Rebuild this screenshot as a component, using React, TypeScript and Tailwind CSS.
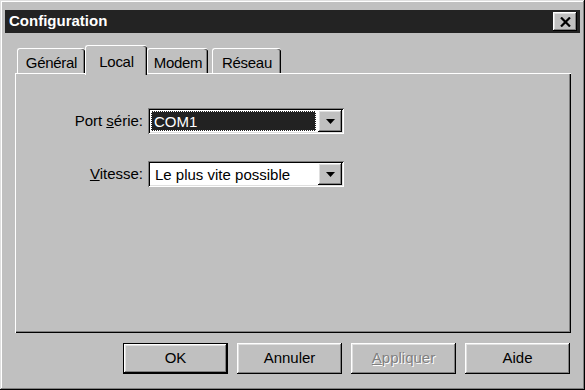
import React from 'react';

const raised =
  'shadow-[inset_-1px_-1px_0_#000,inset_1px_1px_0_#fff,inset_-2px_-2px_0_#808080,inset_2px_2px_0_#dfdfdf]';
const sunken =
  'shadow-[inset_1px_1px_0_#808080,inset_-1px_-1px_0_#fff,inset_2px_2px_0_#000,inset_-2px_-2px_0_#dfdfdf]';

const Arrow = () => (
  <svg width="9" height="5" viewBox="0 0 9 5">
    <path d="M0 0h9L4.5 5z" fill="#000" />
  </svg>
);

interface ComboProps {
  value: string;
  focused?: boolean;
}

const Combo: React.FC<ComboProps> = ({ value, focused }) => (
  <div className={`w-[196px] h-[26px] bg-white flex items-center p-[2px] ${sunken}`}>
    <div className="flex-1 h-full flex items-center pl-[1px] pr-[2px] py-[1px]">
      {focused ? (
        <div className="w-full h-full bg-[#222] border border-dotted border-white text-white flex items-center pl-[2px] leading-none">
          {value}
        </div>
      ) : (
        <div className="pl-[4px] leading-none">{value}</div>
      )}
    </div>
    <div className={`w-[24px] h-full bg-[#c0c0c0] flex items-center justify-center ${raised}`}>
      <Arrow />
    </div>
  </div>
);

const Tab: React.FC<{ label: string; w: string; active?: boolean }> = ({ label, w, active }) => (
  <div
    className={`${w} text-center text-[15px] tracking-[-0.3px] bg-[#c0c0c0] rounded-t-[3px] border-t border-l border-white shadow-[inset_-1px_0_0_#000,inset_-2px_0_0_#808080] ${
      active ? 'relative z-10 h-[30px] -mb-[2px] pt-[5px]' : 'h-[25px] pt-[3px]'
    }`}
  >
    {label}
  </div>
);

const Button: React.FC<{ children: React.ReactNode; def?: boolean }> = ({ children, def }) => (
  <div className={`w-[105px] h-[31px] ${def ? 'border border-black' : ''}`}>
    <div className={`w-full h-full flex items-center justify-center text-[15px] ${raised}`}>{children}</div>
  </div>
);

export default function App() {
  return (
    <div
      className={`w-[585px] h-[390px] bg-[#c0c0c0] text-black font-['Liberation_Sans',Arial,sans-serif] pt-[10px] px-[5px] shadow-[inset_-1px_-1px_0_#000,inset_1px_1px_0_#dfdfdf,inset_-2px_-2px_0_#808080,inset_2px_2px_0_#fff]`}
    >
      <div className="h-[23px] bg-[#232323] flex items-center justify-between pl-[4px] pr-[3px]">
        <span className="text-white font-bold text-[15px]">Configuration</span>
        <div className={`w-[24px] h-[19px] bg-[#c0c0c0] flex items-center justify-center ${raised}`}>
          <svg width="11" height="10" viewBox="0 0 11 10">
            <path d="M1 0.5l9 9M10 0.5l-9 9" stroke="#000" strokeWidth="2.2" />
          </svg>
        </div>
      </div>

      <div className="ml-[10px] mr-[9px] mt-[14px]">
        <div className="flex items-end h-[26px] pl-[2px]">
          <Tab label="Général" w="w-[68px]" />
          <Tab label="Local" w="w-[62px]" active />
          <Tab label="Modem" w="w-[61px]" />
          <div className="w-[4px]" />
          <Tab label="Réseau" w="w-[69px]" />
        </div>
        <div className="h-[260px] border-t border-l border-white shadow-[inset_-1px_-1px_0_#000,inset_-2px_-2px_0_#808080] pt-[34px] text-[15px]">
          <div className="flex items-center">
            <div className="w-[127px] text-right">
              Port <span className="underline">s</span>érie:
            </div>
            <div className="ml-[5px]">
              <Combo value="COM1" focused />
            </div>
          </div>
          <div className="flex items-center mt-[27px]">
            <div className="w-[127px] text-right">
              <span className="underline">V</span>itesse:
            </div>
            <div className="ml-[5px]">
              <Combo value="Le plus vite possible" />
            </div>
          </div>
        </div>
        <div className="flex justify-end gap-[9px] mt-[10px] pr-[1px]">
          <Button def>OK</Button>
          <Button>Annuler</Button>
          <Button>
            <span className="text-[#808080] [text-shadow:1px_1px_0_#fff]">
              <span className="underline">A</span>ppliquer
            </span>
          </Button>
          <Button>Aide</Button>
        </div>
      </div>
    </div>
  );
}
